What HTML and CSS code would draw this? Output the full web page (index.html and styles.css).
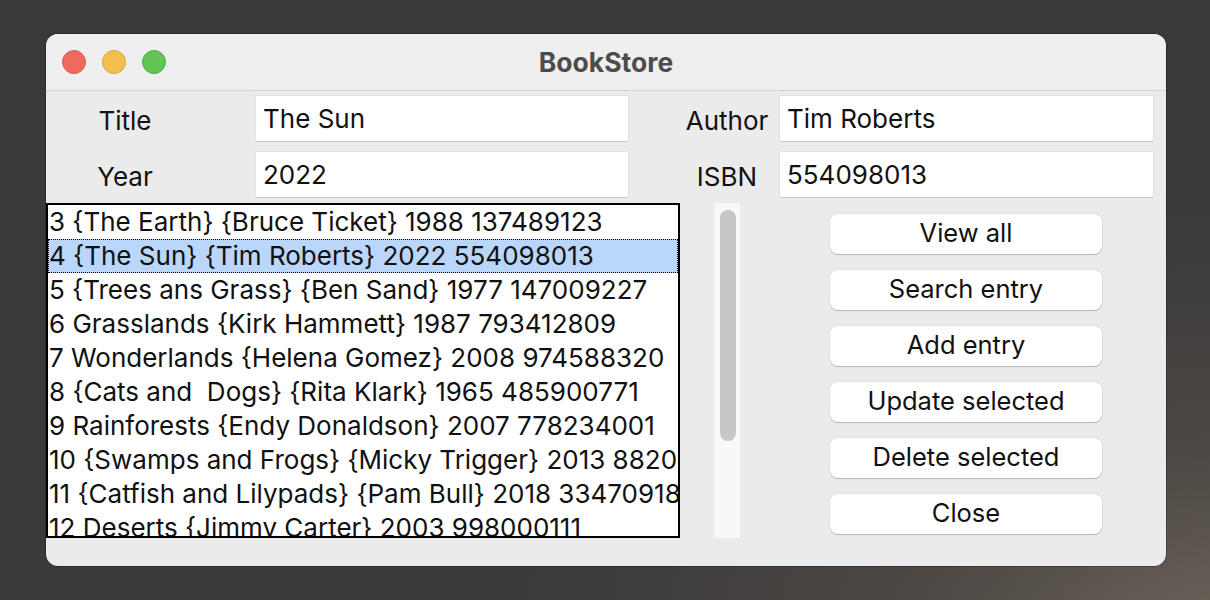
FILE: index.html
```html
<!DOCTYPE html>
<html lang="en">
<head>
<meta charset="utf-8">
<title>BookStore</title>
<link rel="stylesheet" href="styles.css">
</head>
<body>
<div class="window">
  <div class="titlebar">
    <div class="lights">
      <span class="light red"></span>
      <span class="light yellow"></span>
      <span class="light green"></span>
    </div>
    <div class="title">BookStore</div>
  </div>
  <div class="body">
    <div class="form">
      <span class="lbl lbl-left">Title</span>
      <input class="entry" type="text" value="The Sun">
      <span class="lbl lbl-right">Author</span>
      <input class="entry" type="text" value="Tim Roberts">
      <span class="lbl lbl-left">Year</span>
      <input class="entry" type="text" value="2022">
      <span class="lbl lbl-right">ISBN</span>
      <input class="entry" type="text" value="554098013">
    </div>
    <div class="lower">
      <div class="listbox">
        <div class="row">3 {The Earth} {Bruce Ticket} 1988 137489123</div>
        <div class="row selected">4 {The Sun} {Tim Roberts} 2022 554098013</div>
        <div class="row">5 {Trees ans Grass} {Ben Sand} 1977 147009227</div>
        <div class="row">6 Grasslands {Kirk Hammett} 1987 793412809</div>
        <div class="row">7 Wonderlands {Helena Gomez} 2008 974588320</div>
        <div class="row">8 {Cats and&nbsp; Dogs} {Rita Klark} 1965 485900771</div>
        <div class="row">9 Rainforests {Endy Donaldson} 2007 778234001</div>
        <div class="row">10 {Swamps and Frogs} {Micky Trigger} 2013 882051234</div>
        <div class="row">11 {Catfish and Lilypads} {Pam Bull} 2018 334709180</div>
        <div class="row">12 Deserts {Jimmy Carter} 2003 998000111</div>
      </div>
      <div class="scrollbar"><div class="thumb"></div></div>
      <div class="buttons">
        <button class="btn">View all</button>
        <button class="btn">Search entry</button>
        <button class="btn">Add entry</button>
        <button class="btn">Update selected</button>
        <button class="btn">Delete selected</button>
        <button class="btn">Close</button>
      </div>
    </div>
  </div>
</div>
</body>
</html>
```

FILE: styles.css
```css
html, body {
  margin: 0;
  padding: 0;
}
body {
  width: 1210px;
  height: 600px;
  overflow: hidden;
  background: radial-gradient(ellipse 760px 460px at 1240px 650px, #6f655c 0%, #4c4743 45%, rgba(58,57,60,0) 100%), #39383b;
  font-family: Inter, "Noto Sans", sans-serif;
  color: #111;
  padding-top: 34px;
  padding-left: 46px;
  box-sizing: border-box;
}
.window {
  width: 1120px;
  height: 532px;
  border-radius: 12px;
  overflow: hidden;
  background: #ebebeb;
  box-shadow: 0 0 0 0.5px rgba(0,0,0,0.5);
}
.titlebar {
  position: relative;
  height: 56px;
  background: #efefef;
  border-bottom: 1px solid #d2d2d2;
  display: flex;
  align-items: center;
  justify-content: center;
}
.lights {
  position: absolute;
  left: 16px;
  top: 16px;
  display: flex;
  gap: 16px;
}
.light {
  width: 24px;
  height: 24px;
  border-radius: 50%;
  box-sizing: border-box;
}
.red { background: #ee6a5f; border: 1px solid #d65a4f; }
.yellow { background: #f5bf4f; border: 1px solid #d9a53c; }
.green { background: #61c554; border: 1px solid #4ead43; }
.title {
  font-weight: 700;
  font-size: 26.5px;
  color: #4c4c4c;
}
.body {
  padding-top: 5px;
}
.form {
  display: grid;
  grid-template-columns: 210px 372px 152px 373px;
  grid-auto-rows: 45px;
  row-gap: 11px;
  align-items: center;
}
.lbl {
  font-size: 26px;
  text-align: center;
  color: #111;
  padding-top: 4px;
}
.lbl-left { padding-right: 52px; }
.lbl-right { padding-left: 46px; }
.entry {
  height: 45px;
  box-sizing: border-box;
  border: none;
  margin: 0;
  padding: 0 7px;
  background: #fff;
  font-family: inherit;
  font-size: 26px;
  color: #111;
  box-shadow: 0 1px 0 #c6c6c6, 0 0 0 0.5px #d9d9d9;
  outline: none;
}
.lower {
  margin-top: 6px;
  display: flex;
  align-items: flex-start;
}
.listbox {
  width: 634px;
  height: 335px;
  box-sizing: border-box;
  border: 2px solid #000;
  background: #fff;
  overflow: hidden;
  white-space: nowrap;
}
.row {
  height: 34px;
  line-height: 33px;
  font-size: 26px;
  padding-left: 1px;
  color: #111;
}
.row.selected {
  background: #bad6fb;
  outline: 1px dotted #000;
  outline-offset: -1px;
}
.scrollbar {
  margin-left: 34px;
  width: 26px;
  height: 335px;
  box-sizing: border-box;
  padding: 7px 4px 0 6px;
  background: #f8f8f8;
}
.thumb {
  width: 16px;
  height: 231px;
  border-radius: 8px;
  background: #c7c7c7;
}
.buttons {
  margin-left: 90px;
  margin-top: 11px;
  display: flex;
  flex-direction: column;
  gap: 16px;
}
.btn {
  width: 272px;
  height: 40px;
  border: none;
  border-radius: 8px;
  background: #fff;
  font-family: inherit;
  font-size: 25.5px;
  color: #111;
  padding: 0 0 4px;
  box-shadow: 0 1px 1px rgba(0,0,0,0.22), 0 0 0 0.5px rgba(0,0,0,0.08);
}
```
